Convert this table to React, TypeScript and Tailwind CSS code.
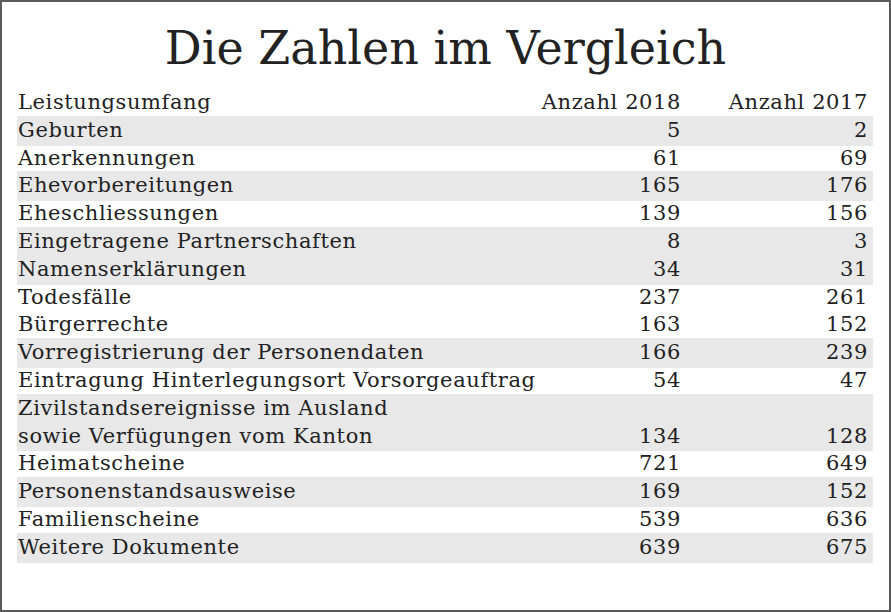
import React from "react";

type Row = { label: string[]; a: string; b: string; gray: boolean };

const rows: Row[] = [
  { label: ["Geburten"], a: "5", b: "2", gray: true },
  { label: ["Anerkennungen"], a: "61", b: "69", gray: false },
  { label: ["Ehevorbereitungen"], a: "165", b: "176", gray: true },
  { label: ["Eheschliessungen"], a: "139", b: "156", gray: false },
  { label: ["Eingetragene Partnerschaften"], a: "8", b: "3", gray: true },
  { label: ["Namenserklärungen"], a: "34", b: "31", gray: true },
  { label: ["Todesfälle"], a: "237", b: "261", gray: false },
  { label: ["Bürgerrechte"], a: "163", b: "152", gray: false },
  { label: ["Vorregistrierung der Personendaten"], a: "166", b: "239", gray: true },
  { label: ["Eintragung Hinterlegungsort Vorsorgeauftrag"], a: "54", b: "47", gray: false },
  { label: ["Zivilstandsereignisse im Ausland", "sowie Verfügungen vom Kanton"], a: "134", b: "128", gray: true },
  { label: ["Heimatscheine"], a: "721", b: "649", gray: false },
  { label: ["Personenstandsausweise"], a: "169", b: "152", gray: true },
  { label: ["Familienscheine"], a: "539", b: "636", gray: false },
  { label: ["Weitere Dokumente"], a: "639", b: "675", gray: true },
];

export default function App() {
  return (
    <div
      className="w-[891px] h-[612px] bg-white text-[#222] border-2 border-[#5a5a5a] px-[15px] pt-[19px]"
      style={{ fontFamily: '"DejaVu Serif", serif' }}
    >
      <h1 className="text-center text-[46px] leading-[55px] font-normal">Die Zahlen im Vergleich</h1>
      <div className="mt-[13px] w-[856px] text-[21px] tracking-[0.6px] leading-[27.8px]">
        <div className="grid grid-cols-[minmax(0,1fr)_150px_192px]">
          <div className="pl-[1px] whitespace-nowrap">Leistungsumfang</div>
          <div className="text-right whitespace-nowrap">Anzahl 2018</div>
          <div className="text-right pr-[5px] whitespace-nowrap">Anzahl 2017</div>
        </div>
        {rows.map((r, i) => (
          <div
            key={i}
            className={
              "grid grid-cols-[minmax(0,1fr)_150px_192px] items-end " +
              (r.gray ? "bg-[#e8e8e8] shadow-[0_-1px_0_#e8e8e8,0_1px_0_#e8e8e8]" : "")
            }
          >
            <div className="pl-[1px] whitespace-nowrap">
              {r.label.map((l, j) => (
                <div key={j}>{l}</div>
              ))}
            </div>
            <div className="text-right">{r.a}</div>
            <div className="text-right pr-[5px]">{r.b}</div>
          </div>
        ))}
      </div>
    </div>
  );
}
